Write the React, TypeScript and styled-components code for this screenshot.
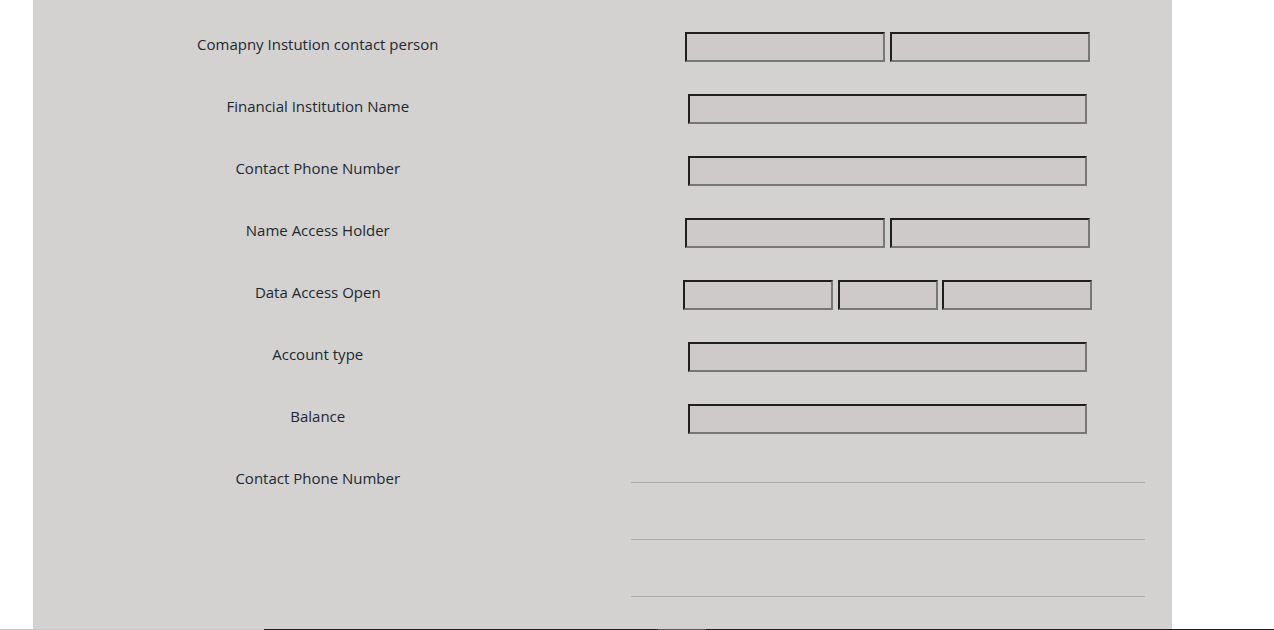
import React from "react";
import styled, { createGlobalStyle } from "styled-components";

const Global = createGlobalStyle`
  html, body { margin: 0; padding: 0; background: #ffffff; }
  body { font-family: "Open Sans", "Noto Sans", sans-serif; }
`;

const Page = styled.div`
  padding-left: 33px;
  width: 1139px;
`;

const Panel = styled.form`
  background: #d3d2d0;
  padding-top: 14px;
`;

const Row = styled.div`
  display: grid;
  grid-template-columns: 1fr 1fr;
  align-items: start;
`;

const Label = styled.label`
  height: 62px;
  display: flex;
  align-items: center;
  justify-content: center;
  font-size: 15px;
  color: #222831;
  padding-bottom: 2px;
  box-sizing: border-box;
`;

const Fields = styled.div<{ $gap: number }>`
  height: 62px;
  display: flex;
  align-items: center;
  justify-content: center;
  gap: ${(p) => p.$gap}px;
  padding: 3px 0 0 1px;
  box-sizing: border-box;
`;

const Input = styled.input<{ $w: number }>`
  width: ${(p) => p.$w}px;
  height: 30px;
  box-sizing: border-box;
  margin: 0;
  padding: 0 4px;
  background: #cfcaca;
  border-style: solid;
  border-width: 2px;
  border-color: #1f1f1f #777777 #777777 #1f1f1f;
  font: inherit;
  outline: none;
`;

const Lines = styled.div`
  display: flex;
  flex-direction: column;
  align-items: center;
  gap: 56px;
  padding: 34px 0 32px 1px;
`;

const Rule = styled.div`
  width: 514px;
  height: 1px;
  background: #a9a9a9;
`;

const Footer = styled.div`
  display: grid;
  grid-template-columns: 264px 394px 48px 1fr;
  height: 1px;
`;

const FootSeg = styled.div<{ $c: string }>`
  background: ${(p) => p.$c};
`;

const rows: { label: string; widths: number[] }[] = [
  { label: "Comapny Instution contact person", widths: [200, 200] },
  { label: "Financial Institution Name", widths: [399] },
  { label: "Contact Phone Number", widths: [399] },
  { label: "Name Access Holder", widths: [200, 200] },
  { label: "Data Access Open", widths: [150, 100, 150] },
  { label: "Account type", widths: [399] },
  { label: "Balance", widths: [399] },
];

export default function App() {
  return (
    <>
      <Global />
      <Page>
        <Panel onSubmit={(e) => e.preventDefault()}>
          {rows.map((r) => (
            <Row key={r.label}>
              <Label>{r.label}</Label>
              <Fields $gap={r.widths.length === 3 ? 4.5 : 5}>
                {r.widths.map((w, i) => (
                  <Input key={i} $w={w} type="text" aria-label={r.label} />
                ))}
              </Fields>
            </Row>
          ))}
          <Row>
            <Label>Contact Phone Number</Label>
            <Lines>
              <Rule />
              <Rule />
              <Rule />
            </Lines>
          </Row>
        </Panel>
      </Page>
      <Footer>
        <FootSeg $c="#c6c6c6" />
        <FootSeg $c="#1f1f1f" />
        <FootSeg $c="#5a5a5a" />
        <FootSeg $c="#1f1f1f" />
      </Footer>
    </>
  );
}
